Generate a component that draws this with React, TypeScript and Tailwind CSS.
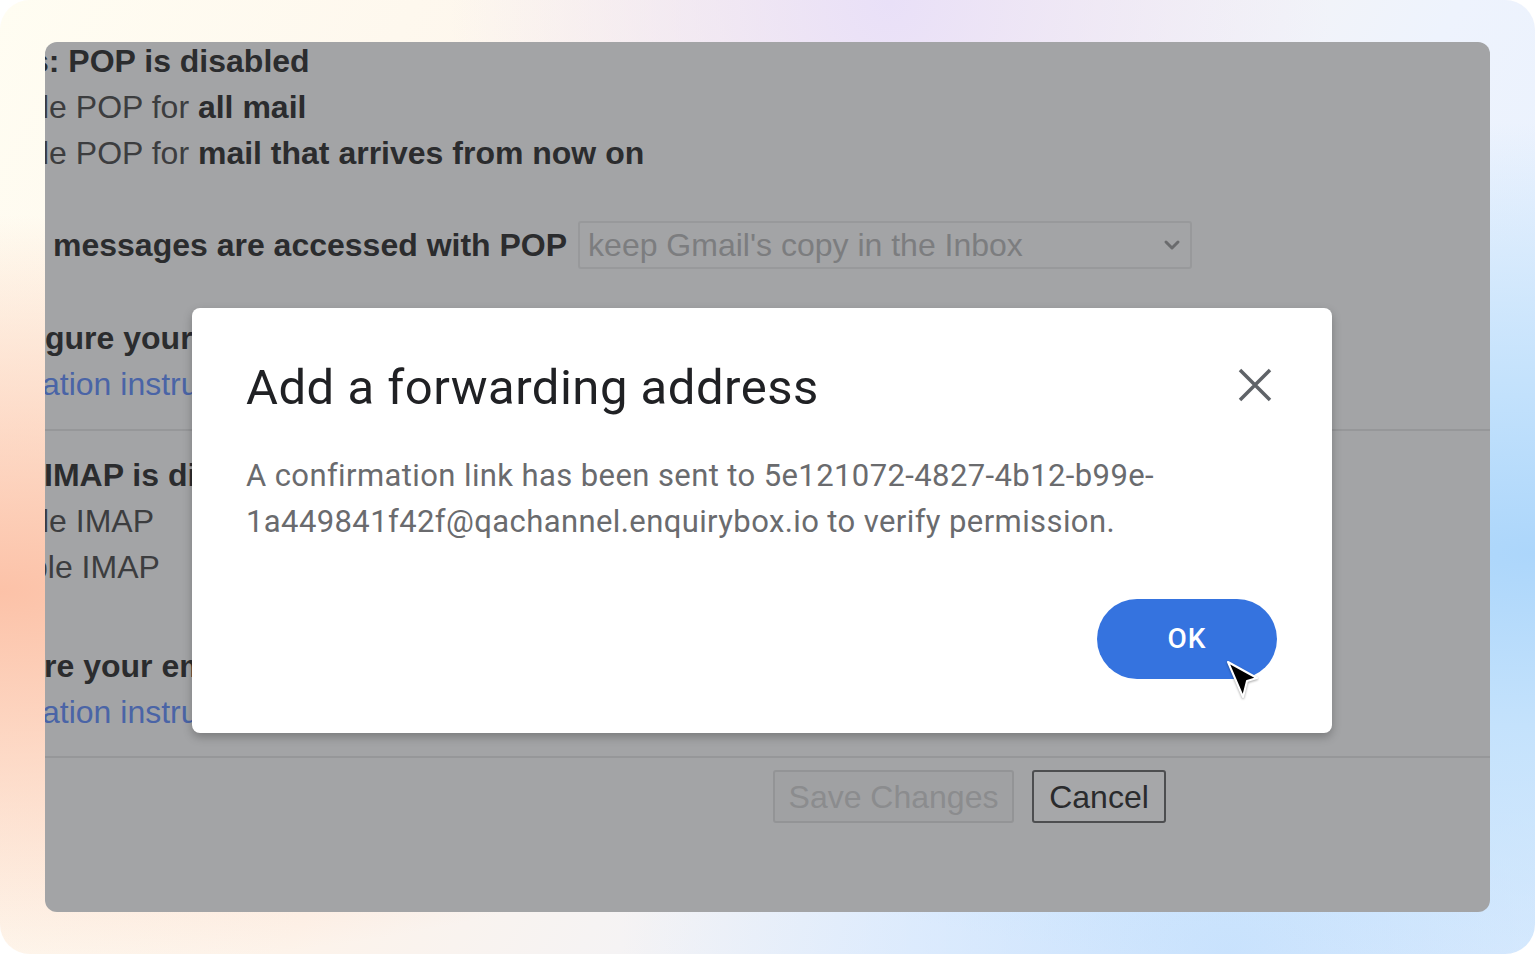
import { ChevronDown } from 'lucide-react'

const arial = { fontFamily: '"Liberation Sans", Arial, sans-serif' }

const Line = ({ children, className = '' }: { children: React.ReactNode; className?: string }) => (
  <div className={`h-[46px] leading-[46px] whitespace-nowrap ${className}`}>{children}</div>
)

const Cursor = () => (
  <svg width="40" height="46" viewBox="0 0 40 46" className="drop-shadow-[0_1px_1px_rgba(0,0,0,0.35)]">
    <path
      d="M2 2 L31 18 L21 21 L17 37 Z"
      fill="#000"
      stroke="#fff"
      strokeWidth="2"
      strokeLinejoin="round"
    />
  </svg>
)

export default function App() {
  return (
    <div className="w-[1535px] h-[954px] bg-white">
      <div className="h-full rounded-[30px] px-[45px] pt-[42px] pb-[42px] bg-[radial-gradient(ellipse_at_0%_62%,#fcc2a8_0%,transparent_45%),radial-gradient(ellipse_at_100%_58%,#acd6fb_0%,#c4e2fc_22%,transparent_55%),radial-gradient(ellipse_at_58%_0%,#e9e0f8_0%,transparent_35%),radial-gradient(ellipse_at_80%_100%,#c9e2fd_0%,transparent_35%),linear-gradient(120deg,#fffdf2_0%,#fdf3ea_40%,#eef3fd_70%,#e4f0fe_100%)]">
        <div
          className="relative h-[870px] overflow-hidden rounded-[12px] bg-[#a3a4a6] text-[32px]"
          style={arial}
        >
          <div className="-mt-[4px]">
            <Line className="-ml-[14px] font-bold text-[#2b2c2e]">s: POP is disabled</Line>
            <Line className="-ml-[3px] text-[#3c3d3f]">
              le POP for <span className="font-bold text-[#2b2c2e]">all mail</span>
            </Line>
            <Line className="-ml-[3px] text-[#3c3d3f]">
              le POP for <span className="font-bold text-[#2b2c2e]">mail that arrives from now on</span>
            </Line>

            <div className="mt-[45px] flex h-[48px] items-center whitespace-nowrap">
              <span className="ml-[8px] font-bold text-[#2b2c2e]">messages are accessed with POP</span>
              <div className="ml-[11px] flex h-[48px] w-[614px] items-center justify-between rounded-[3px] border-2 border-[#98999b] pl-[8px] pr-[6px] text-[#7c7d7f]">
                <span>keep Gmail's copy in the Inbox</span>
                <ChevronDown className="h-[24px] w-[24px] text-[#6a6b6d]" strokeWidth={3} />
              </div>
            </div>

            <Line className="mt-[46px] font-bold text-[#2b2c2e]">gure your email client</Line>
            <Line className="-ml-[3px] text-[#4a64a6]">ation instructions</Line>

            <div className="mt-[22px] border-t-2 border-[#969799]" />

            <Line className="mt-[21px] -ml-[1px] font-bold text-[#2b2c2e]">IMAP is disabled</Line>
            <Line className="-ml-[3px] text-[#3c3d3f]">le IMAP</Line>
            <Line className="-ml-[15px] text-[#3c3d3f]">ble IMAP</Line>

            <Line className="mt-[53px] -ml-[1px] font-bold text-[#2b2c2e]">re your email client</Line>
            <Line className="-ml-[3px] text-[#4a64a6]">ation instructions</Line>

            <div className="mt-[21px] border-t-2 border-[#969799]" />

            <div className="mt-[12px] flex gap-[18px] pl-[728px]">
              <div className="flex h-[53px] w-[241px] items-center justify-center rounded-[3px] border-2 border-[#939496] bg-[#a0a1a3] text-[#8b8c8e]">
                Save Changes
              </div>
              <div className="flex h-[53px] w-[134px] items-center justify-center rounded-[3px] border-2 border-[#4d4e50] bg-[#a6a7a9] text-[#2a2b2d]">
                Cancel
              </div>
            </div>
          </div>

          {/* modal */}
          <div
            className="absolute left-[147px] top-[266px] flex h-[425px] w-[1140px] flex-col rounded-[8px] bg-white pl-[54px] pr-[55px] pt-[52px] shadow-[0_4px_10px_rgba(0,0,0,0.25)]"
            style={{ fontFamily: 'Roboto, "Noto Sans", sans-serif' }}
          >
            <div className="flex items-start justify-between">
              <h2 className="text-[49px] leading-[56px] tracking-[0.5px] text-[#202124]">Add a forwarding address</h2>
              <svg width="34" height="34" viewBox="0 0 34 34" className="mr-[5px] mt-[8px] shrink-0">
                <path d="M2 2 L32 32 M32 2 L2 32" stroke="#5f6368" strokeWidth="3.5" />
              </svg>
            </div>
            <p className="mt-[37px] text-[31px] leading-[46px] tracking-[0.4px] text-[#6a6b6e]">
              A confirmation link has been sent to 5e121072-4827-4b12-b99e-
              <br />
              1a449841f42f@qachannel.enquirybox.io to verify permission.
            </p>
            <div className="mt-[54px] flex justify-end">
              <div className="flex h-[80px] w-[180px] items-center justify-center rounded-full bg-[#3573df] text-[28px] font-medium tracking-[1px] text-white">
                OK
              </div>
            </div>
          </div>

          <div className="absolute left-[1181px] top-[618px]">
            <Cursor />
          </div>
        </div>
      </div>
    </div>
  )
}
